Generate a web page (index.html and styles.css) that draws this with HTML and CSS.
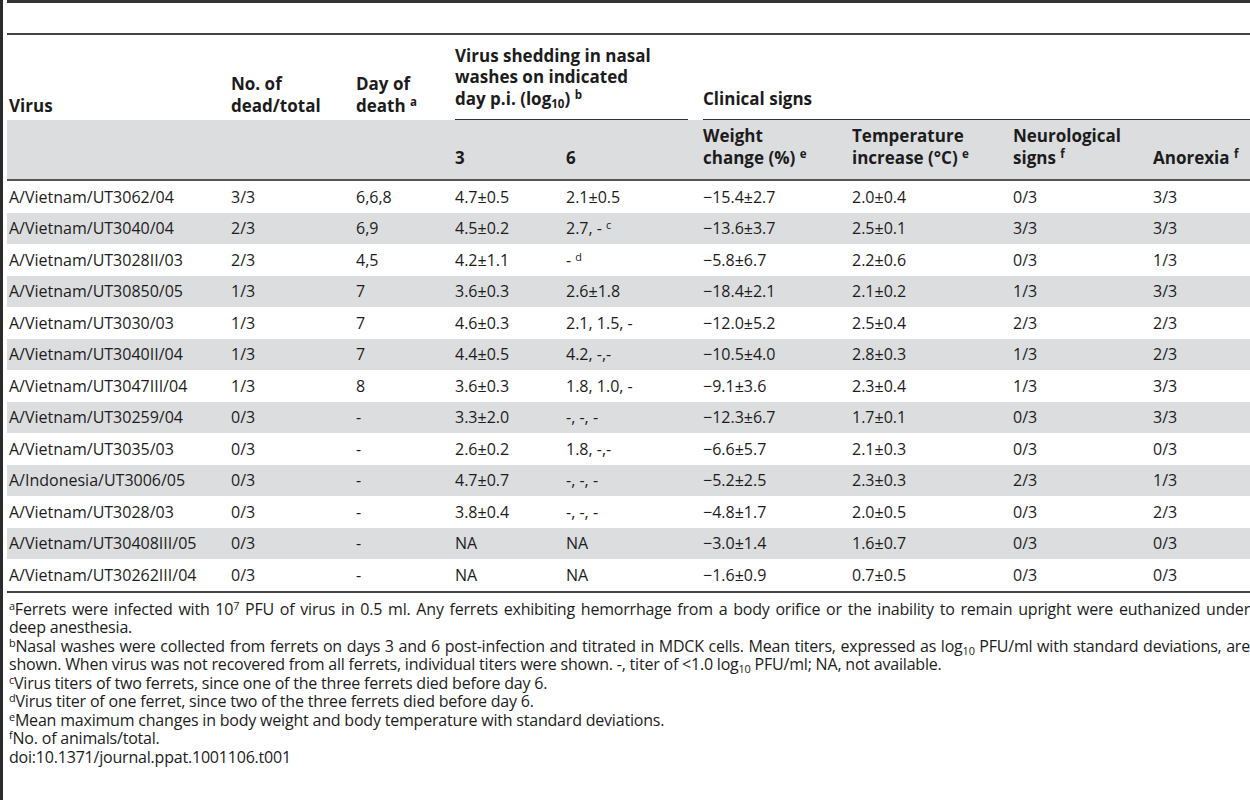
FILE: index.html
```html
<!DOCTYPE html>
<html lang="en">
<head>
    <meta charset="UTF-8">
    <meta name="viewport" content="width=device-width, initial-scale=1.0">
    <title>Table 1. Ferret infection results</title>
    <link rel="stylesheet" href="styles.css">
</head>
<body>
    <div class="frame">
        <div class="table-top"></div>

        <table class="results">
            <colgroup>
                <col class="c-virus">
                <col class="c-dead">
                <col class="c-day">
                <col class="c-d3">
                <col class="c-d6">
                <col class="c-weight">
                <col class="c-temp">
                <col class="c-neuro">
                <col class="c-anorexia">
            </colgroup>
            <thead>
                <tr class="head-main">
                    <th>Virus</th>
                    <th>No. of<br>dead/total</th>
                    <th>Day of<br>death <sup>a</sup></th>
                    <th colspan="2" class="span-head"><div class="span-label">Virus shedding in nasal<br>washes on indicated<br>day p.i. (log<sub>10</sub>) <sup>b</sup></div></th>
                    <th colspan="4" class="span-head last"><div class="span-label">Clinical signs</div></th>
                </tr>
                <tr class="head-sub">
                    <th></th>
                    <th></th>
                    <th></th>
                    <th>3</th>
                    <th>6</th>
                    <th>Weight<br>change (%) <sup>e</sup></th>
                    <th>Temperature<br>increase (&deg;C) <sup>e</sup></th>
                    <th>Neurological<br>signs <sup>f</sup></th>
                    <th>Anorexia <sup>f</sup></th>
                </tr>
            </thead>
            <tbody>
                <tr><td>A/Vietnam/UT3062/04</td><td>3/3</td><td>6,6,8</td><td>4.7&plusmn;0.5</td><td>2.1&plusmn;0.5</td><td>&minus;15.4&plusmn;2.7</td><td>2.0&plusmn;0.4</td><td>0/3</td><td>3/3</td></tr>
                <tr><td>A/Vietnam/UT3040/04</td><td>2/3</td><td>6,9</td><td>4.5&plusmn;0.2</td><td>2.7, - <sup>c</sup></td><td>&minus;13.6&plusmn;3.7</td><td>2.5&plusmn;0.1</td><td>3/3</td><td>3/3</td></tr>
                <tr><td>A/Vietnam/UT3028II/03</td><td>2/3</td><td>4,5</td><td>4.2&plusmn;1.1</td><td>- <sup>d</sup></td><td>&minus;5.8&plusmn;6.7</td><td>2.2&plusmn;0.6</td><td>0/3</td><td>1/3</td></tr>
                <tr><td>A/Vietnam/UT30850/05</td><td>1/3</td><td>7</td><td>3.6&plusmn;0.3</td><td>2.6&plusmn;1.8</td><td>&minus;18.4&plusmn;2.1</td><td>2.1&plusmn;0.2</td><td>1/3</td><td>3/3</td></tr>
                <tr><td>A/Vietnam/UT3030/03</td><td>1/3</td><td>7</td><td>4.6&plusmn;0.3</td><td>2.1, 1.5, -</td><td>&minus;12.0&plusmn;5.2</td><td>2.5&plusmn;0.4</td><td>2/3</td><td>2/3</td></tr>
                <tr><td>A/Vietnam/UT3040II/04</td><td>1/3</td><td>7</td><td>4.4&plusmn;0.5</td><td>4.2, -,-</td><td>&minus;10.5&plusmn;4.0</td><td>2.8&plusmn;0.3</td><td>1/3</td><td>2/3</td></tr>
                <tr><td>A/Vietnam/UT3047III/04</td><td>1/3</td><td>8</td><td>3.6&plusmn;0.3</td><td>1.8, 1.0, -</td><td>&minus;9.1&plusmn;3.6</td><td>2.3&plusmn;0.4</td><td>1/3</td><td>3/3</td></tr>
                <tr><td>A/Vietnam/UT30259/04</td><td>0/3</td><td>-</td><td>3.3&plusmn;2.0</td><td>-, -, -</td><td>&minus;12.3&plusmn;6.7</td><td>1.7&plusmn;0.1</td><td>0/3</td><td>3/3</td></tr>
                <tr><td>A/Vietnam/UT3035/03</td><td>0/3</td><td>-</td><td>2.6&plusmn;0.2</td><td>1.8, -,-</td><td>&minus;6.6&plusmn;5.7</td><td>2.1&plusmn;0.3</td><td>0/3</td><td>0/3</td></tr>
                <tr><td>A/Indonesia/UT3006/05</td><td>0/3</td><td>-</td><td>4.7&plusmn;0.7</td><td>-, -, -</td><td>&minus;5.2&plusmn;2.5</td><td>2.3&plusmn;0.3</td><td>2/3</td><td>1/3</td></tr>
                <tr><td>A/Vietnam/UT3028/03</td><td>0/3</td><td>-</td><td>3.8&plusmn;0.4</td><td>-, -, -</td><td>&minus;4.8&plusmn;1.7</td><td>2.0&plusmn;0.5</td><td>0/3</td><td>2/3</td></tr>
                <tr><td>A/Vietnam/UT30408III/05</td><td>0/3</td><td>-</td><td>NA</td><td>NA</td><td>&minus;3.0&plusmn;1.4</td><td>1.6&plusmn;0.7</td><td>0/3</td><td>0/3</td></tr>
                <tr><td>A/Vietnam/UT30262III/04</td><td>0/3</td><td>-</td><td>NA</td><td>NA</td><td>&minus;1.6&plusmn;0.9</td><td>0.7&plusmn;0.5</td><td>0/3</td><td>0/3</td></tr>
            </tbody>
        </table>

        <div class="notes">
            <p><span class="full-line"><sup>a</sup>Ferrets were infected with 10<sup>7</sup> PFU of virus in 0.5 ml. Any ferrets exhibiting hemorrhage from a body orifice or the inability to remain upright were euthanized under</span> deep anesthesia.</p>
            <p><span class="full-line"><sup>b</sup>Nasal washes were collected from ferrets on days 3 and 6 post-infection and titrated in MDCK cells. Mean titers, expressed as log<sub>10</sub> PFU/ml with standard deviations, are</span> shown. When virus was not recovered from all ferrets, individual titers were shown. -, titer of &lt;1.0 log<sub>10</sub> PFU/ml; NA, not available.</p>
            <p><sup>c</sup>Virus titers of two ferrets, since one of the three ferrets died before day 6.</p>
            <p><sup>d</sup>Virus titer of one ferret, since two of the three ferrets died before day 6.</p>
            <p><sup>e</sup>Mean maximum changes in body weight and body temperature with standard deviations.</p>
            <p><sup>f</sup>No. of animals/total.</p>
            <p>doi:10.1371/journal.ppat.1001106.t001</p>
        </div>
    </div>
</body>
</html>
```

FILE: styles.css
```css
body {
    margin: 0;
    padding: 0;
    background: white;
    font-family: 'Open Sans', 'Noto Sans', sans-serif;
    color: #1c1c1c;
}

.frame {
    border-left: 3px solid #2b2b2b;
    padding-left: 4px;
    min-height: 800px;
    box-sizing: border-box;
}

.table-top {
    height: 30px;
    border-top: 3px solid #333;
    border-bottom: 2px solid #444;
}

.results {
    width: 100%;
    border-collapse: collapse;
    table-layout: fixed;
    font-size: 16px;
}

.c-virus { width: 222px; }
.c-dead { width: 125px; }
.c-day { width: 99px; }
.c-d3 { width: 111px; }
.c-d6 { width: 137px; }
.c-weight { width: 149px; }
.c-temp { width: 161px; }
.c-neuro { width: 140px; }
.c-anorexia { width: 99px; }

th, td {
    text-align: left;
    padding: 0 0 0 2px;
    white-space: nowrap;
}

th {
    font-size: 17px;
    font-weight: bold;
    line-height: 21.5px;
    vertical-align: bottom;
}

.head-main th {
    height: 81px;
    padding-bottom: 4px;
}

.head-main th.span-head {
    padding-bottom: 0;
    padding-right: 13px;
}

.head-main th.span-head.last {
    padding-right: 0;
}

.span-label {
    border-bottom: 1px solid #333;
    padding-bottom: 10px;
}

.head-sub th {
    background-color: #dcdddf;
    height: 48px;
    padding-bottom: 11px;
    border-bottom: 2px solid #555;
}

td {
    height: 31.5px;
    vertical-align: middle;
}

tbody tr:nth-child(even) td {
    background-color: #dcdddf;
}

tbody tr:last-child td {
    border-bottom: 2px solid #444;
}

sup {
    font-size: 0.68em;
    line-height: 0;
    vertical-align: 0.5em;
}

sub {
    font-size: 0.68em;
    line-height: 0;
    vertical-align: -0.25em;
}

.notes {
    padding: 7px 0 0 2px;
    font-size: 16px;
    line-height: 18.5px;
    letter-spacing: -0.2px;
}

.notes p {
    margin: 0;
}

.full-line {
    display: block;
    white-space: nowrap;
    text-align: justify;
    text-align-last: justify;
}
```
